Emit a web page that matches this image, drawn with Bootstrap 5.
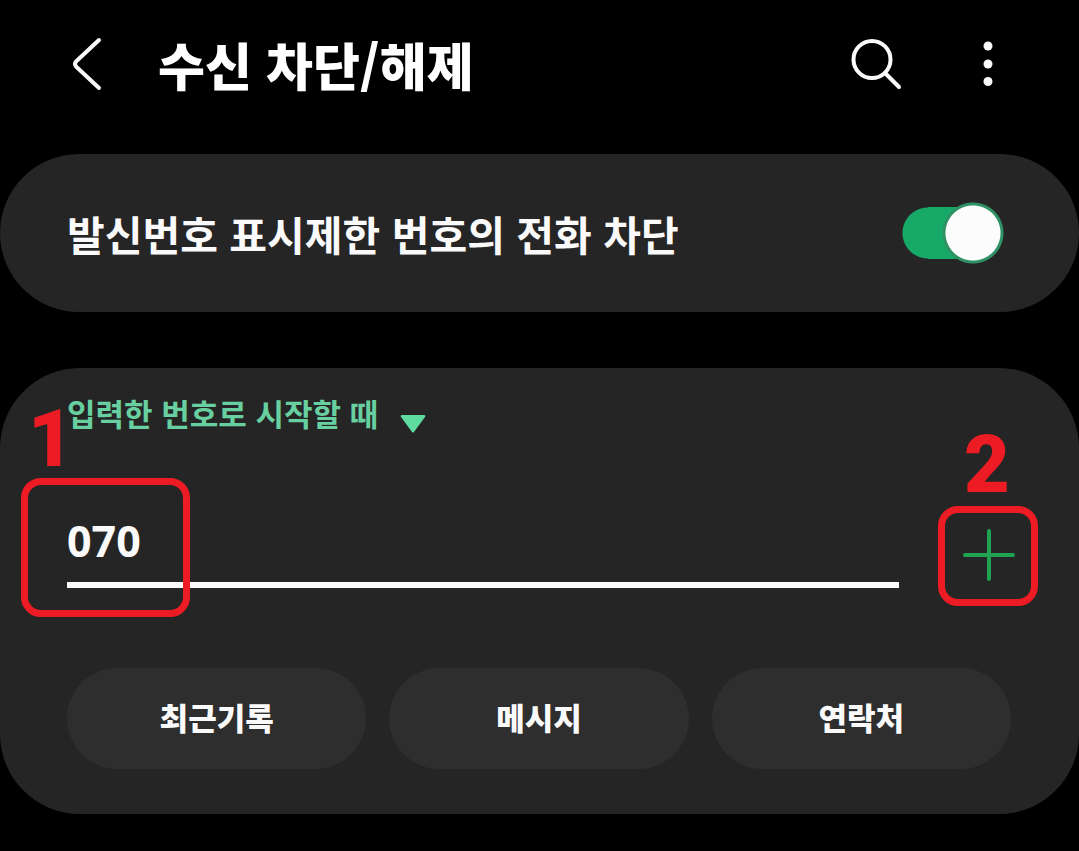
<!DOCTYPE html>
<html lang="ko" data-bs-theme="dark">
<head>
<meta charset="utf-8">
<meta name="viewport" content="width=device-width, initial-scale=1">
<title>수신 차단/해제</title>
<link href="https://cdn.jsdelivr.net/npm/bootstrap@5.3.0/dist/css/bootstrap.min.css" rel="stylesheet">
<style>
  body { background: #000; color: #fafafa; font-family: "Noto Sans CJK KR", sans-serif; }
  svg { display: block; }
  .app-bar { height: 154px; padding: 0 76px 26px 67px; }
  .app-bar h1 { font-size: 51px; font-weight: 900; line-height: 60px; margin-left: 49px; }
  .app-bar .search-btn { margin-right: 67px; }
  .icon-btn { padding: 0; border: 0; background: none; color: #fafafa; }
  .panel { background: #252525; border-radius: 80px; }
  .panel-switch { min-height: 158px; padding: 0 75px 0 67px; }
  .panel-switch label { font-size: 41px; font-weight: 700; line-height: 60px; }
  .toggle { appearance: none; flex: none; width: 102px; height: 62px; margin: 0; cursor: pointer;
    background: radial-gradient(circle at 71px 31px, #fcfcfc 27px, #2f9264 28px, #2f9264 30px, transparent 31px),
      linear-gradient(#17a967, #17a967) 26px 5px / 45px 52px no-repeat,
      radial-gradient(circle at 26px 31px, #17a967 25px, transparent 26px); }
  .panel-rule { margin-top: 56px; padding: 22px 68px 45px 67px; }
  .rule-select { appearance: none; width: 325px; height: 46px; padding: 0; border: 0; background: none;
    color: #68cfa0; font-size: 31px; font-weight: 700; line-height: 46px; }
  .rule-arrow { margin: 25px 0 0 8px; }
  .entry-row { margin: 64px -27px 62px 0; gap: 39px; }
  .number-input { height: 88px; padding: 0 0 2px; border: 0; border-bottom: 6px solid #fafafa; border-radius: 0;
    background: none; color: #fafafa; font: 700 43px/60px "Noto Sans", "Noto Sans CJK KR", sans-serif; }
  .add-wrap { margin-top: 6px; }
  .add-btn { width: 100px; height: 100px; color: #1fa351; }
  .source-row { gap: 23px; }
  .source-btn { height: 101px; padding: 0 0 4px; border: 0; border-radius: 51px; background: #2e2e2e; color: #fafafa;
    font-size: 31px; font-weight: 900; line-height: 46px; }
  .callout-box { position: absolute; border: 7px solid #ed1c24; border-radius: 20px; pointer-events: none; }
  .callout-entry { left: -46px; top: -22px; width: 169px; height: 139px; }
  .callout-add { inset: 0; }
  .callout-num { position: absolute; color: #ed1c24; font: 900 79px/77px Roboto, sans-serif; pointer-events: none; }
  .callout-one { left: -39px; top: -99px; }
  .callout-two { left: 26px; top: -79px; }
</style>
</head>
<body>
<header class="app-bar d-flex align-items-center">
  <button class="icon-btn" type="button" aria-label="뒤로">
    <svg width="42" height="60" viewBox="0 0 42 60" fill="none" stroke="currentColor" stroke-width="4" stroke-linecap="round" stroke-linejoin="round"><path d="M32 6 9 27.500Q7 30 9 32.500L32 54"/></svg>
  </button>
  <h1 class="mb-0 me-auto">수신 차단/해제</h1>
  <button class="icon-btn search-btn" type="button" aria-label="검색">
    <svg width="60" height="60" viewBox="0 0 60 60" fill="none" stroke="currentColor" stroke-width="4" stroke-linecap="round"><circle cx="26" cy="25.500" r="18.500"/><path d="m39 39 14 14"/></svg>
  </button>
  <button class="icon-btn" type="button" aria-label="더보기">
    <svg width="30" height="60" viewBox="0 0 30 60" fill="currentColor"><circle cx="15" cy="12" r="4.500"/><circle cx="15" cy="30" r="4.500"/><circle cx="15" cy="47.500" r="4.500"/></svg>
  </button>
</header>
<main>
  <section class="panel panel-switch d-flex align-items-center justify-content-between">
    <label for="blockHidden">발신번호 표시제한 번호의 전화 차단</label>
    <input class="toggle" type="checkbox" role="switch" id="blockHidden" checked>
  </section>
  <section class="panel panel-rule">
    <div class="d-flex">
      <select class="rule-select" aria-label="차단 조건">
        <option>입력한 번호로 시작할 때</option>
      </select>
      <svg class="rule-arrow" width="26" height="18" viewBox="0 0 26 18" fill="#5fdaa0" aria-hidden="true"><path d="M2 0H24Q26 0 25 2L14 17Q13 18 12 17L1 2Q0 0 2 0Z"/></svg>
    </div>
    <div class="entry-row d-flex align-items-start">
      <div class="position-relative flex-grow-1">
        <input class="number-input form-control shadow-none" type="text" inputmode="tel" value="070" aria-label="전화번호">
        <span class="callout-box callout-entry"></span>
        <span class="callout-num callout-one">1</span>
      </div>
      <div class="add-wrap position-relative">
        <button class="icon-btn add-btn d-flex align-items-center justify-content-center" type="button" aria-label="추가">
          <svg width="54" height="54" viewBox="0 0 54 54" fill="none" stroke="currentColor" stroke-width="4" stroke-linecap="round"><path d="M28 2v48M4 26h48"/></svg>
        </button>
        <span class="callout-box callout-add"></span>
        <span class="callout-num callout-two">2</span>
      </div>
    </div>
    <div class="source-row d-flex">
      <button class="source-btn btn flex-fill w-100" type="button">최근기록</button>
      <button class="source-btn btn flex-fill w-100" type="button">메시지</button>
      <button class="source-btn btn flex-fill w-100" type="button">연락처</button>
    </div>
  </section>
</main>
<script src="https://cdn.jsdelivr.net/npm/bootstrap@5.3.0/dist/js/bootstrap.bundle.min.js"></script>
</body>
</html>
